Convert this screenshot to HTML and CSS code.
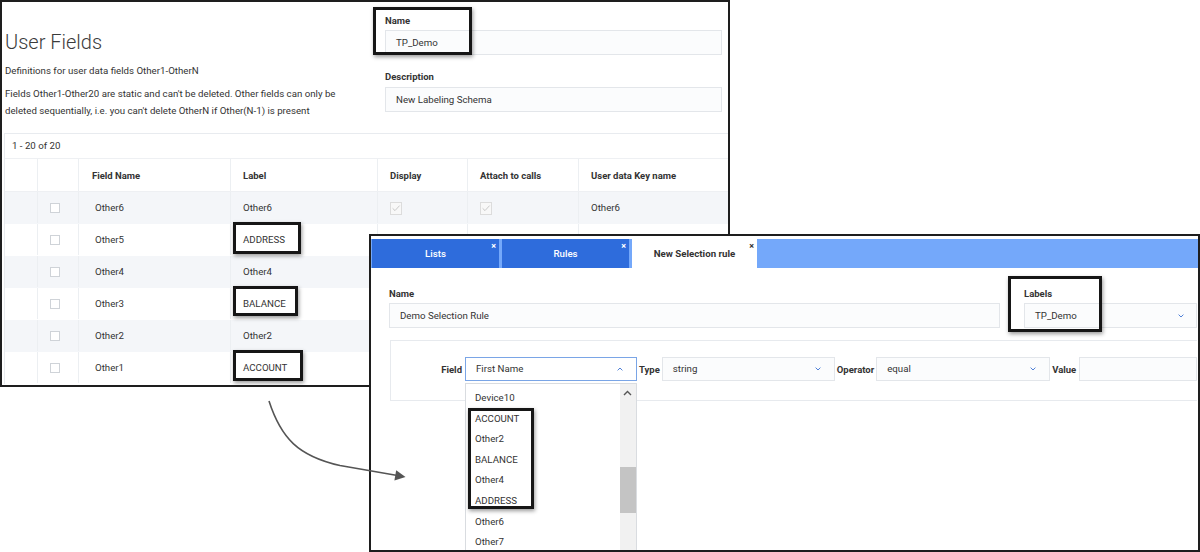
FILE: index.html
```html
<!DOCTYPE html>
<html lang="en">
<head>
  <meta charset="UTF-8">
  <meta name="viewport" content="width=device-width, initial-scale=1.0">
  <title>User Fields - Selection rule</title>
  <link rel="stylesheet" href="styles.css">
</head>
<body>
  <div class="canvas">
    <!-- screenshot 1 : user fields -->
    <div class="shot shot-fields">
      <div class="uf-top">
        <div class="uf-intro">
          <h1>User Fields</h1>
          <p class="uf-def">Definitions for user data fields Other1-OtherN</p>
          <p class="uf-note">Fields Other1-Other20 are static and can't be deleted. Other fields can only be<br>deleted sequentially, i.e. you can't delete OtherN if Other(N-1) is present</p>
        </div>
        <div class="uf-form">
          <div class="fld-label lbl-name">Name</div>
          <div class="input">TP_Demo</div>
          <div class="fld-label lbl-desc">Description</div>
          <div class="input input-desc">New Labeling Schema</div>
        </div>
      </div>

      <div class="grid-box">
        <div class="grid-count">1 - 20 of 20</div>
        <div class="grid-row grid-head">
          <div class="cell"></div>
          <div class="cell"></div>
          <div class="cell c-name">Field Name</div>
          <div class="cell">Label</div>
          <div class="cell">Display</div>
          <div class="cell">Attach to calls</div>
          <div class="cell">User data Key name</div>
        </div>
        <div class="grid-row odd">
          <div class="cell"></div>
          <div class="cell"><span class="box"></span></div>
          <div class="cell c-name">Other6</div>
          <div class="cell">Other6</div>
          <div class="cell"><span class="box checked"><svg width="12" height="12" viewBox="0 0 12 12"><path d="M2.6 6.3 L5 8.6 L9.6 3.6" fill="none" stroke="#c9c9c9" stroke-width="1"/></svg></span></div>
          <div class="cell"><span class="box checked"><svg width="12" height="12" viewBox="0 0 12 12"><path d="M2.6 6.3 L5 8.6 L9.6 3.6" fill="none" stroke="#c9c9c9" stroke-width="1"/></svg></span></div>
          <div class="cell">Other6</div>
        </div>
        <div class="grid-row">
          <div class="cell"></div>
          <div class="cell"><span class="box"></span></div>
          <div class="cell c-name">Other5</div>
          <div class="cell">ADDRESS</div>
          <div class="cell"></div>
          <div class="cell"></div>
          <div class="cell"></div>
        </div>
        <div class="grid-row odd">
          <div class="cell"></div>
          <div class="cell"><span class="box"></span></div>
          <div class="cell c-name">Other4</div>
          <div class="cell">Other4</div>
          <div class="cell"></div>
          <div class="cell"></div>
          <div class="cell"></div>
        </div>
        <div class="grid-row">
          <div class="cell"></div>
          <div class="cell"><span class="box"></span></div>
          <div class="cell c-name">Other3</div>
          <div class="cell">BALANCE</div>
          <div class="cell"></div>
          <div class="cell"></div>
          <div class="cell"></div>
        </div>
        <div class="grid-row odd">
          <div class="cell"></div>
          <div class="cell"><span class="box"></span></div>
          <div class="cell c-name">Other2</div>
          <div class="cell">Other2</div>
          <div class="cell"></div>
          <div class="cell"></div>
          <div class="cell"></div>
        </div>
        <div class="grid-row">
          <div class="cell"></div>
          <div class="cell"><span class="box"></span></div>
          <div class="cell c-name">Other1</div>
          <div class="cell">ACCOUNT</div>
          <div class="cell"></div>
          <div class="cell"></div>
          <div class="cell"></div>
        </div>
      </div>

      <!-- annotation frames -->
      <div class="mark mark-name"></div>
      <div class="mark mark-address"></div>
      <div class="mark mark-balance"></div>
      <div class="mark mark-account"></div>
    </div>

    <!-- screenshot 2 : new selection rule -->
    <div class="shot shot-rule">
      <div class="tabbar">
        <div class="tab">Lists<span class="tab-x">&times;</span></div>
        <div class="tab">Rules<span class="tab-x">&times;</span></div>
        <div class="tab tab-active">New Selection rule<span class="tab-x">&times;</span></div>
      </div>

      <div class="rule-body">
        <div class="rule-head">
          <div class="rule-name">
            <div class="fld-label">Name</div>
            <div class="input">Demo Selection Rule</div>
          </div>
          <div class="rule-labels">
            <div class="fld-label">Labels</div>
            <div class="input select">TP_Demo
              <svg class="chev" width="6" height="4" viewBox="0 0 6 4"><path d="M0.6 0.6 L3 3 L5.4 0.6" fill="none" stroke="#4f80d8" stroke-width="1"/></svg>
            </div>
          </div>
        </div>

        <div class="filter">
          <div class="filter-row">
            <span class="f-label f-first">Field</span>
            <div class="input select sel-field focused">First Name
              <svg class="chev" width="6" height="4" viewBox="0 0 6 4"><path d="M0.6 3.4 L3 1 L5.4 3.4" fill="none" stroke="#4f80d8" stroke-width="1"/></svg>
              <div class="dropdown">
                <div class="dd-item">Device10</div>
                <div class="dd-item">ACCOUNT</div>
                <div class="dd-item">Other2</div>
                <div class="dd-item">BALANCE</div>
                <div class="dd-item">Other4</div>
                <div class="dd-item">ADDRESS</div>
                <div class="dd-item">Other6</div>
                <div class="dd-item">Other7</div>
                <div class="dd-scroll">
                  <svg class="dd-up" width="9" height="6" viewBox="0 0 9 6"><path d="M1 5 L4.5 1.5 L8 5" fill="none" stroke="#555" stroke-width="1.4"/></svg>
                  <div class="dd-thumb"></div>
                </div>
              </div>
            </div>
            <span class="f-label">Type</span>
            <div class="input select sel-type">string
              <svg class="chev" width="6" height="4" viewBox="0 0 6 4"><path d="M0.6 0.6 L3 3 L5.4 0.6" fill="none" stroke="#4f80d8" stroke-width="1"/></svg>
            </div>
            <span class="f-label">Operator</span>
            <div class="input select sel-op">equal
              <svg class="chev" width="6" height="4" viewBox="0 0 6 4"><path d="M0.6 0.6 L3 3 L5.4 0.6" fill="none" stroke="#4f80d8" stroke-width="1"/></svg>
            </div>
            <span class="f-label">Value</span>
            <div class="input sel-value"></div>
          </div>
        </div>
      </div>

      <div class="mark mark-labels"></div>
      <div class="mark mark-list"></div>
    </div>

    <!-- connecting arrow -->
    <svg class="arrow" width="1200" height="552" viewBox="0 0 1200 552">
      <path d="M269 401 C281 438, 298 456, 340 465.5 L396 475.3" fill="none" stroke="#555" stroke-width="1.6"/>
      <polygon points="405.5,477 396.2,470.3 394.4,480.6" fill="#555"/>
    </svg>
  </div>
</body>
</html>
```

FILE: styles.css
```css
/* base */
* {
  box-sizing: border-box;
}
body {
  margin: 0;
  background: #fff;
  color: #333;
  font-family: Roboto, "Liberation Sans", sans-serif;
  font-size: 9.7px;
}
.canvas {
  position: relative;
  width: 1200px;
  height: 552px;
  overflow: hidden;
  background: #fff;
}
.shot {
  position: absolute;
  background: #fff;
  border: 2px solid #1e1e1e;
  overflow: hidden;
}
.shot-fields {
  left: 0;
  top: 0;
  width: 730px;
  height: 387px;
}
.shot-rule {
  left: 369px;
  top: 234px;
  width: 831px;
  height: 318px;
  z-index: 2;
}

/* shared form bits */
.fld-label {
  font-weight: 700;
  font-size: 9.5px;
  line-height: 14px;
  color: #333;
}
.input {
  position: relative;
  height: 25px;
  border: 1px solid #e3e6ea;
  background: #fbfcfd;
  padding: 0 10px;
  line-height: 23px;
  white-space: nowrap;
}
.chev {
  position: absolute;
  right: 12px;
  top: 10px;
}

/* user fields */
.uf-top {
  display: flex;
  height: 131px;
}
.uf-intro {
  width: 383px;
  padding-left: 3px;
}
.uf-intro h1 {
  margin: 28px 0 0;
  font-size: 20px;
  font-weight: 300;
  line-height: 25px;
  color: #3b3b3b;
}
.uf-def {
  margin: 8px 0 0;
  line-height: 16px;
}
.uf-note {
  margin: 7px 0 0;
  line-height: 16.5px;
}
.uf-form {
  flex: 1;
  padding-right: 6px;
}
.lbl-name {
  margin-top: 12px;
  margin-bottom: 2px;
}
.lbl-desc {
  margin-top: 15px;
  margin-bottom: 3px;
}

.grid-box {
  margin-left: 2px;
  border-top: 1px solid #e8ebef;
  border-left: 1px solid #e8ebef;
}
.grid-count {
  height: 25px;
  padding-left: 7px;
  line-height: 24px;
  border-bottom: 1px solid #eef0f3;
}
.grid-row {
  display: grid;
  grid-template-columns: 32px 41px 152px 147px 90px 111px 220px;
  height: 32px;
  padding-bottom: 1px;
}
.grid-row.odd {
  background: #f4f6f9;
}
.grid-head {
  height: 33px;
  padding-bottom: 0;
  border-bottom: 1px solid #eef0f3;
  font-weight: 700;
  font-size: 9.5px;
}
.cell {
  display: flex;
  align-items: center;
  padding-left: 12px;
  border-left: 1px solid #eceff2;
  white-space: nowrap;
}
.cell:first-child {
  border-left: none;
}
.grid-row .c-name {
  padding-left: 16px;
}
.grid-head .c-name {
  padding-left: 13px;
}
.box {
  display: block;
  width: 10px;
  height: 10px;
  border: 1px solid #cfd3d8;
  background: #fff;
}
.box.checked {
  width: 12px;
  height: 13px;
  border-color: #dcdcdc;
  background: #f8f8f8;
  margin-top: 2px;
}
.box.checked svg {
  display: block;
  margin: -1px 0 0 -1px;
}

/* annotation frames */
.mark {
  position: absolute;
  border: 3px solid #161616;
  box-shadow: 1px 2px 4px rgba(0, 0, 0, 0.4);
  z-index: 3;
}
.mark-name { left: 371px; top: 5px; width: 99px; height: 48px; }
.mark-address { left: 231px; top: 220px; width: 68px; height: 32px; }
.mark-balance { left: 231px; top: 284px; width: 65px; height: 30px; }
.mark-account { left: 231px; top: 348px; width: 70px; height: 31px; }
.mark-labels { left: 637px; top: 40px; width: 94px; height: 56px; }
.mark-list { left: 97px; top: 172px; width: 66px; height: 101px; }

/* selection rule */
.tabbar {
  display: flex;
  gap: 3px;
  margin-top: 3px;
  height: 29px;
  padding-left: 1px;
  background: #74a8fa;
}
.tab {
  position: relative;
  width: 127px;
  display: flex;
  align-items: center;
  justify-content: center;
  background: #2e6cdc;
  color: #fff;
  font-weight: 500;
}
.tab-active {
  width: 125px;
  background: #fff;
  color: #333;
  font-weight: 700;
}
.tab-x {
  position: absolute;
  top: 3px;
  right: 3px;
  font-size: 9px;
  line-height: 8px;
  font-weight: 700;
}
.rule-body {
  padding: 0 1px 0 18px;
}
.rule-head {
  display: flex;
  gap: 24px;
  margin-top: 19px;
}
.rule-head .fld-label {
  margin-bottom: 2px;
}
.rule-name {
  flex: 1;
}
.rule-labels {
  width: 173px;
}

.filter {
  margin: 12px 0 0 1px;
  height: 61px;
  border: 1px solid #e7eaee;
  border-right: none;
  padding-top: 16px;
}
.filter-row {
  display: flex;
  align-items: center;
  height: 24px;
}
.f-label {
  padding: 0 1px 0 2px;
  font-weight: 700;
  font-size: 9.5px;
}
.f-first {
  width: 74px;
  padding-right: 3px;
  text-align: right;
}
.filter .input {
  height: 24px;
  line-height: 22px;
}
.sel-field { width: 172px; }
.sel-type { width: 173px; margin-left: 1px; }
.sel-op { width: 174px; margin-left: 1px; }
.sel-value { flex: 1; margin-left: 2px; }
.filter .chev {
  top: 9px;
  right: 13px;
}
.focused {
  border-color: #7aa5e6;
  background: #fff;
}

.dropdown {
  position: absolute;
  left: -1px;
  top: 25px;
  width: 172px;
  height: 220px;
  border: 1px solid #d9dce0;
  background: #fff;
  padding-top: 4px;
  z-index: 2;
}
.dd-item {
  padding-left: 9px;
  line-height: 20.6px;
}
.dd-scroll {
  position: absolute;
  top: 0;
  right: 0;
  bottom: 0;
  width: 16px;
  background: #f1f1f1;
}
.dd-up {
  position: absolute;
  top: 6px;
  left: 3px;
}
.dd-thumb {
  position: absolute;
  top: 83px;
  left: 0;
  right: 0;
  height: 46px;
  background: #c4c4c4;
}

.arrow {
  position: absolute;
  left: 0;
  top: 0;
  z-index: 5;
  pointer-events: none;
}
```
